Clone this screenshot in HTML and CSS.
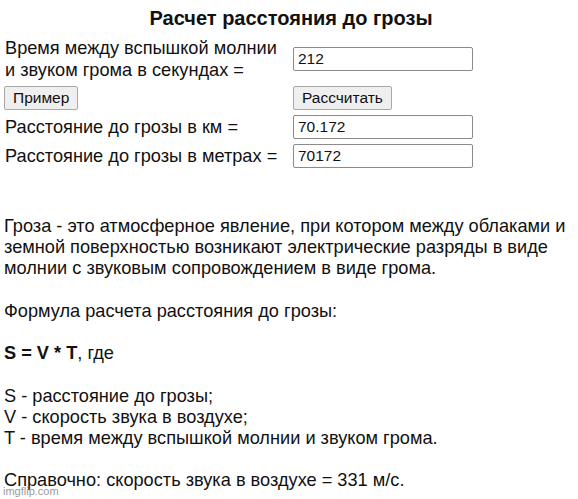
FILE: index.html
```html
<!DOCTYPE html>
<html lang="ru">
<head>
<meta charset="utf-8">
<link rel="stylesheet" href="styles.css">
</head>
<body>
<div class="page">
  <h1 class="title">Расчет расстояния до грозы</h1>
  <div class="form">
    <div class="label">Время между вспышкой молнии<br>и звуком грома в секундах =</div>
    <div class="cell"><input class="field" type="text" value="212"></div>
    <div class="cell"><button class="btn">Пример</button></div>
    <div class="cell"><button class="btn">Рассчитать</button></div>
    <div class="label">Расстояние до грозы в км =</div>
    <div class="cell"><input class="field" type="text" value="70.172"></div>
    <div class="label">Расстояние до грозы в метрах =</div>
    <div class="cell"><input class="field" type="text" value="70172"></div>
  </div>
  <div class="text">
    <p>Гроза - это атмосферное явление, при котором между облаками и земной поверхностью возникают электрические разряды в виде молнии с звуковым сопровождением в виде грома.</p>
    <p>Формула расчета расстояния до грозы:</p>
    <p><b>S = V * T</b>, где</p>
    <p>S - расстояние до грозы;<br>V - скорость звука в воздухе;<br>T - время между вспышкой молнии и звуком грома.</p>
    <p>Справочно: скорость звука в воздухе = 331 м/с.</p>
  </div>
</div>
<div class="watermark">imgflip.com</div>
</body>
</html>
```
FILE: styles.css
```css
html, body {
  margin: 0;
  padding: 0;
  background: #fff;
}
body {
  font-family: "Liberation Sans", Arial, sans-serif;
  color: #111;
  width: 578px;
  height: 499px;
  overflow: hidden;
  position: relative;
}
.page {
  padding: 0 0 0 4px;
}
.title {
  margin: 0;
  padding-top: 6px;
  font-size: 20px;
  font-weight: bold;
  text-align: center;
  line-height: 24px;
  box-sizing: border-box;
  height: 37px;
}
.form {
  display: grid;
  grid-template-columns: 289px 180px;
  row-gap: 5px;
  align-items: center;
}
.label {
  font-size: 18.2px;
  line-height: 22px;
  padding-left: 1px;
}
.field {
  box-sizing: border-box;
  width: 180px;
  height: 24px;
  border: 1px solid #8a8a8a;
  border-radius: 2px;
  font-family: "Liberation Sans", Arial, sans-serif;
  font-size: 15.5px;
  padding: 0 4px;
  color: #111;
  margin: 0;
  display: block;
}
.btn {
  box-sizing: border-box;
  height: 24px;
  font-family: "Liberation Sans", Arial, sans-serif;
  font-size: 15.5px;
  padding: 0 8px;
  background: #efefef;
  border: 1px solid #a8a8a8;
  border-radius: 2px;
  color: #111;
  margin: 0;
  display: block;
}
.text {
  margin-top: 48px;
  font-size: 18.2px;
  line-height: 21.2px;
}
.text p {
  margin: 0 0 21.2px 0;
}
.watermark {
  position: absolute;
  left: 3px;
  top: 485px;
  font-size: 11px;
  color: #9a9a9a;
  font-family: "Liberation Sans", Arial, sans-serif;
}
```
